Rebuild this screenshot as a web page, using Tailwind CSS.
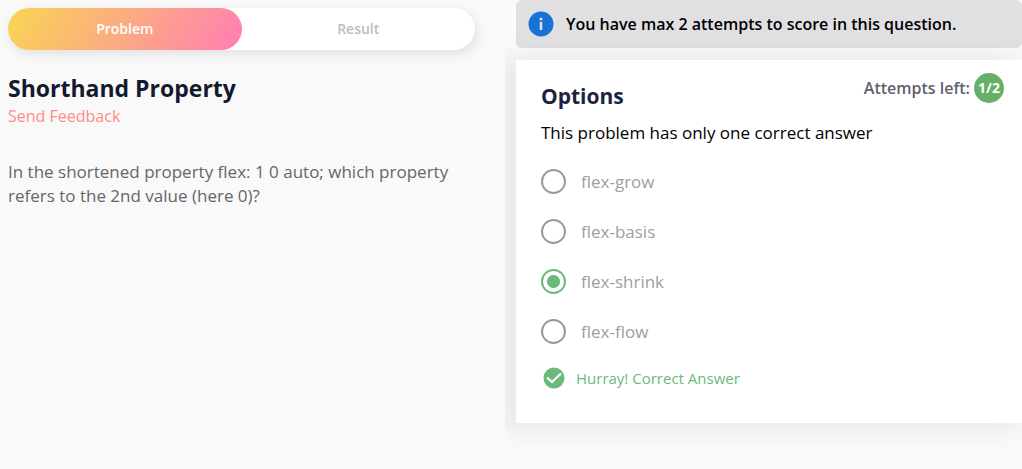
<!DOCTYPE html>
<html lang="en">
<head>
<meta charset="utf-8">
<meta name="viewport" content="width=device-width, initial-scale=1">
<title>Shorthand Property</title>
<script src="https://cdn.jsdelivr.net/npm/@tailwindcss/browser@4"></script>
</head>
<body class="grid min-h-screen grid-cols-[505fr_517fr] bg-[#f9f9f9] font-['Open_Sans',sans-serif] text-base text-black">
  <section class="min-w-0 px-2 pt-2">
    <div role="tablist" class="mr-[22px] flex h-[42px] rounded-full bg-white text-sm shadow-[2px_4px_12px_rgba(0,0,0,0.1)]">
      <button role="tab" aria-selected="true" class="flex-1 rounded-full bg-linear-[120deg] from-[#f9d553] to-[#ff7eb3] font-semibold text-white">Problem</button>
      <button role="tab" aria-selected="false" class="flex-1 font-semibold text-[#bdbdbd]">Result</button>
    </div>
    <h1 class="mt-[22px] text-[23px] leading-8 font-bold text-[#14192d]">Shorthand Property</h1>
    <a href="#" class="block text-base leading-6 text-[#ff8c8c]">Send Feedback</a>
    <p class="mt-8 max-w-[450px] text-[17px] leading-6 text-[#666]">In the shortened property flex: 1 0 auto; which property refers to the 2nd value (here 0)?</p>
  </section>

  <section class="min-w-0 overflow-hidden bg-[#fafafa] pl-[11px]">
    <div class="flex h-12 items-center gap-3 rounded-md bg-[#e0e0e2] pl-3">
      <svg class="size-[26px] shrink-0" viewBox="0 0 26 26" aria-hidden="true">
        <circle cx="13" cy="13" r="12.5" fill="#1771d6"/>
        <circle cx="13" cy="8" r="1.5" fill="#e0e0e2"/>
        <path d="M13 11v8" stroke="#e0e0e2" stroke-width="2.6"/>
      </svg>
      <p class="font-semibold">You have max 2 attempts to score in this question.</p>
    </div>
    <div class="mt-3 bg-white pt-3 pr-[18px] pb-[33px] pl-[25px] shadow-[-10px_2px_24px_6px_rgba(0,0,0,0.07)]">
      <div class="flex justify-between">
        <h2 class="mt-2 text-[21px] leading-8 font-bold text-[#1c2340]">Options</h2>
        <div class="flex h-8 items-center gap-1 font-semibold text-[#5f6070]">
          <span>Attempts left:</span>
          <span class="flex size-[30px] items-center justify-center rounded-full bg-[#65b168] text-sm font-bold text-white">1/2</span>
        </div>
      </div>
      <fieldset class="mt-[9px] text-[17px]">
        <legend class="mb-6 leading-6">This problem has only one correct answer</legend>
        <div class="flex flex-col gap-[25px] text-[#9e9e9e]">
          <label class="flex h-[25px] items-center gap-[15px]"><input type="radio" name="answer" class="size-[25px] appearance-none rounded-full border-2 border-[#9a9a9a] checked:border-[#6abb7b] checked:bg-[radial-gradient(circle,#6abb7b_6px,transparent_7px)]">flex-grow</label>
          <label class="flex h-[25px] items-center gap-[15px]"><input type="radio" name="answer" class="size-[25px] appearance-none rounded-full border-2 border-[#9a9a9a] checked:border-[#6abb7b] checked:bg-[radial-gradient(circle,#6abb7b_6px,transparent_7px)]">flex-basis</label>
          <label class="flex h-[25px] items-center gap-[15px]"><input type="radio" name="answer" checked class="size-[25px] appearance-none rounded-full border-2 border-[#9a9a9a] checked:border-[#6abb7b] checked:bg-[radial-gradient(circle,#6abb7b_6px,transparent_7px)]">flex-shrink</label>
          <label class="flex h-[25px] items-center gap-[15px]"><input type="radio" name="answer" class="size-[25px] appearance-none rounded-full border-2 border-[#9a9a9a] checked:border-[#6abb7b] checked:bg-[radial-gradient(circle,#6abb7b_6px,transparent_7px)]">flex-flow</label>
        </div>
      </fieldset>
      <p class="mt-[22px] flex h-6 items-center gap-[11px] pl-[2px] text-[15px] text-[#6abb7b]">
        <svg class="size-[22px]" viewBox="0 0 22 22" aria-hidden="true">
          <circle cx="11" cy="11" r="10.5" fill="#6abb7b"/>
          <path d="M4 10.5l5 4.5 9-8.5" fill="none" stroke="#fff" stroke-width="2.2"/>
        </svg>
        Hurray! Correct Answer
      </p>
    </div>
  </section>
</body>
</html>
